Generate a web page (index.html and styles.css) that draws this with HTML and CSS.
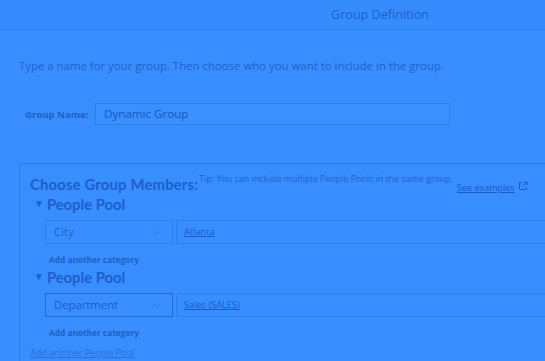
FILE: index.html
```html
<!DOCTYPE html>
<html>
<head>
<meta charset="utf-8">
<link rel="stylesheet" href="styles.css">
</head>
<body>
<header class="topbar"><span class="title">Group Definition</span></header>
<main class="content">
  <p class="intro">Type a name for your group. Then choose who you want to include in the group.</p>
  <div class="name-row">
    <label class="name-label">Group Name:</label>
    <div class="name-input">Dynamic Group</div>
  </div>
  <section class="panel">
    <div class="panel-head">
      <h2 class="panel-title">Choose Group Members:</h2>
      <span class="tip">Tip: You can include multiple People Pools in the same group.</span>
      <a class="examples">See examples <svg class="ext" width="10" height="10" viewBox="0 0 10 10"><path d="M4 1.5H1.5v7h7V6M6 1h3v3M9 1 4.5 5.5" fill="none" stroke="currentColor" stroke-width="1"/></svg></a>
    </div>
    <div class="pool">
      <div class="pool-title"><span class="tri">&#9660;</span>People Pool</div>
      <div class="criteria">
        <div class="select">City<svg class="chev" width="8" height="5" viewBox="0 0 8 5"><path d="M1 1l3 3 3-3" fill="none" stroke="currentColor" stroke-width="1"/></svg></div>
        <div class="value"><a>Atlanta</a></div>
      </div>
      <div class="add-cat">Add another category</div>
    </div>
    <div class="pool">
      <div class="pool-title"><span class="tri">&#9660;</span>People Pool</div>
      <div class="criteria">
        <div class="select sel-dark">Department<svg class="chev" width="8" height="5" viewBox="0 0 8 5"><path d="M1 1l3 3 3-3" fill="none" stroke="currentColor" stroke-width="1"/></svg></div>
        <div class="value"><a>Sales (SALES)</a></div>
      </div>
      <div class="add-cat">Add another category</div>
    </div>
    <a class="add-pool">Add another People Pool</a>
  </section>
</main>
</body>
</html>
```
FILE: styles.css
```css
* { box-sizing: border-box; }
html, body { margin: 0; padding: 0; }
body {
  background: #388efe;
  font-family: "Open Sans", "Liberation Sans", sans-serif;
  color: #1e63cf;
  width: 545px;
  height: 361px;
  overflow: hidden;
}
.topbar {
  height: 30px;
  border-bottom: 1px solid #2f82f0;
  background: #368cfc;
  display: flex;
  align-items: center;
  padding-left: 331px;
}
.title {
  font-size: 12.6px;
  color: #1d61cd;
}
.content {
  padding: 0 0 0 19px;
}
.intro {
  margin: 28px 0 0 0;
  font-size: 11.4px;
  line-height: 16px;
  color: #1f62cc;
}
.name-row {
  display: flex;
  align-items: center;
  margin-top: 29px;
  padding-left: 6px;
}
.name-label {
  font-size: 9.6px;
  font-weight: 700;
  width: 70px;
  color: #1f60c6;
}
.name-input {
  width: 355px;
  height: 22px;
  border: 1px solid #2c7ee8;
  background: #3a90fe;
  padding: 0 8px;
  font-size: 11.6px;
  line-height: 20px;
  color: #1756c2;
}
.panel {
  margin-top: 38px;
  border: 1px solid #2b7de6;
  border-right: none;
  border-bottom: none;
  height: 250px;
  padding: 0 0 0 10px;
}
.panel-head {
  display: flex;
  align-items: flex-start;
  padding-top: 10px;
  height: 31px;
}
.panel-title {
  margin: 0;
  font-family: "Lato", sans-serif;
  font-weight: 700;
  font-size: 14.8px;
  letter-spacing: 0.2px;
  line-height: 20px;
  color: #1d5fcb;
}
.tip {
  font-size: 8.9px;
  line-height: 10px;
  margin-left: 1px;
  margin-top: 0px;
  white-space: nowrap;
  color: #1e62cc;
}
.examples {
  font-size: 9px;
  white-space: nowrap;
  margin-left: 4px;
  margin-top: 7px;
  text-decoration: underline;
  color: #1b5ac6;
  display: flex;
  align-items: center;
  gap: 3px;
}
.ext { margin-top: -3px; }
.pool-title {
  font-family: "Lato", sans-serif;
  font-weight: 700;
  font-size: 14.8px;
  line-height: 18px;
  height: 18px;
  color: #1d5fcb;
  display: flex;
  align-items: center;
  padding-left: 4px;
}
.tri {
  font-size: 10px;
  margin-right: 3px;
  margin-top: -3px;
}
.criteria {
  display: flex;
  align-items: center;
  margin-top: 7px;
  padding-left: 15px;
  gap: 3px;
}
.select {
  width: 128px;
  height: 24px;
  border: 1px solid #2d7fe9;
  padding: 0 11px 0 8px;
  font-size: 11.3px;
  line-height: 22px;
  color: #1f62cc;
  display: flex;
  align-items: center;
  justify-content: space-between;
}
.sel-dark { border-color: #2469d6; color: #1a5bc7; }
.chev { color: #2a77df; }
.value {
  flex: 1;
  height: 24px;
  border: 1px solid #2d7fe9;
  border-right: none;
  padding-left: 7px;
  font-size: 9.2px;
  line-height: 22px;
}
.value a {
  text-decoration: underline;
  color: #1b5ac6;
}
.add-cat {
  font-size: 8.3px;
  font-weight: 700;
  color: #1f60c6;
  padding-left: 19px;
  margin-top: 11px;
  line-height: 10px;
  height: 10px;
  margin-bottom: 3px;
}
.add-pool {
  display: block;
  font-size: 9px;
  line-height: 12px;
  text-decoration: underline;
  color: #2a6fd6;
  margin-top: 9px;
}
```
